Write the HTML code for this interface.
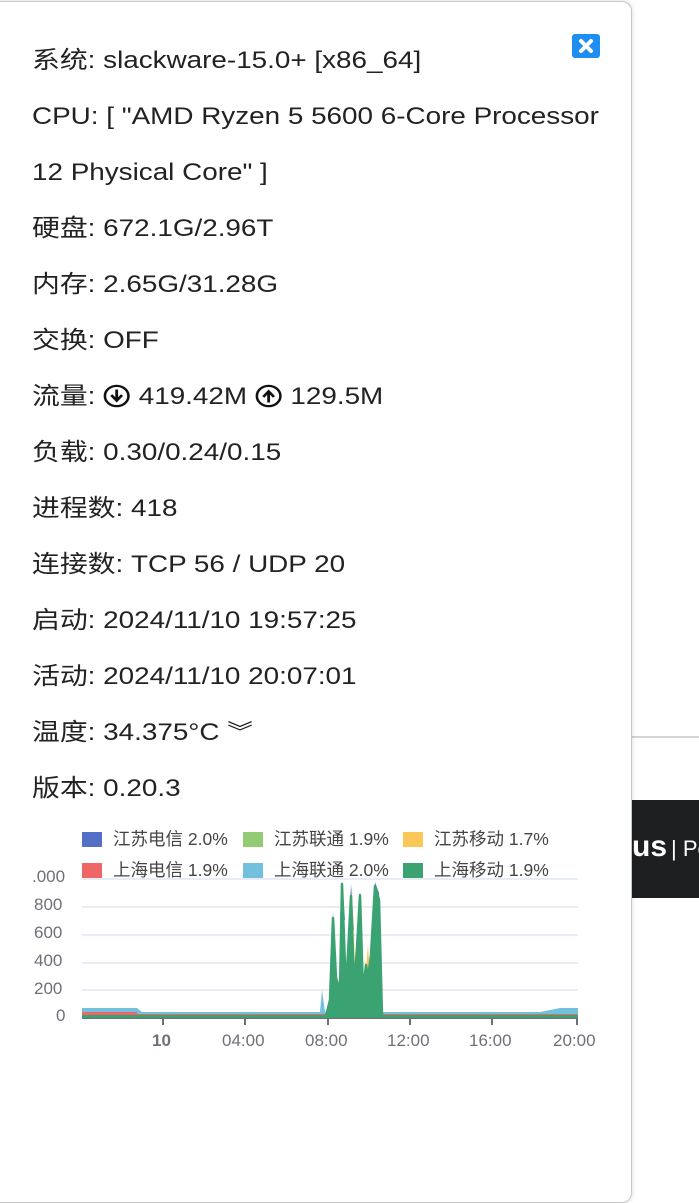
<!DOCTYPE html>
<html><head><meta charset="utf-8"><style>
html,body{margin:0;padding:0;width:699px;height:1083px;overflow:hidden;background:#fff;font-family:"Liberation Sans","Noto Sans CJK SC",sans-serif;}
.line{position:absolute;left:632px;right:0;top:736px;height:2px;background:#d6d6d6}
.bar{position:absolute;left:0;right:0;top:800px;height:98px;background:#1e1f21;color:#fff}
.bar span{position:absolute;left:632px;top:30px;font-size:30px;font-weight:bold;white-space:nowrap}
.bar span i{font-style:normal;font-weight:normal;font-size:22px;margin-left:4px}
.card{position:absolute;left:-10px;top:1px;width:640px;height:1200px;background:#fff;border:1px solid #c8c8c8;border-radius:10px;box-shadow:0 0 6px rgba(0,0,0,.15)}
.rows{position:absolute;left:32px;top:33px;font-size:24px;color:#222;line-height:56px;white-space:nowrap;transform:scaleX(1.16);transform-origin:0 0}
.close{position:absolute;left:572px;top:34px;width:28px;height:24px;background:#1e8ff0;border-radius:3px}
.lg{position:absolute;font-size:17.5px;color:#444;white-space:nowrap}
.lg b{display:inline-block;width:20px;height:15px;vertical-align:-2px;margin-right:11px}
.ax{position:absolute;font-size:17px;color:#6e7079}
</style></head><body>
<div class="line"></div>
<div class="bar"><span>us<i>| Po</i></span></div>
<div class="card"></div>
<div class="close"><svg width="28" height="24" viewBox="0 0 28 24"><path d="M9 7L19 17M19 7L9 17" stroke="#fff" stroke-width="4" stroke-linecap="round"/></svg></div>
<div class="rows">
<div>系统: slackware-15.0+ [x86_64]</div>
<div>CPU: [ "AMD Ryzen 5 5600 6-Core Processor</div>
<div>12 Physical Core" ]</div>
<div>硬盘: 672.1G/2.96T</div>
<div>内存: 2.65G/31.28G</div>
<div>交换: OFF</div>
<div>流量: <svg width="24" height="26" viewBox="0 0 26 26" style="vertical-align:-5px"><circle cx="13" cy="13" r="11" fill="none" stroke="#111" stroke-width="2.4"/><path d="M13 6v11M8 12l5 6 5-6" stroke="#111" stroke-width="2.6" fill="none"/></svg> 419.42M <svg width="24" height="26" viewBox="0 0 26 26" style="vertical-align:-5px"><circle cx="13" cy="13" r="11" fill="none" stroke="#111" stroke-width="2.4"/><path d="M13 20V9M8 14l5-6 5 6" stroke="#111" stroke-width="2.6" fill="none"/></svg> 129.5M</div>
<div>负载: 0.30/0.24/0.15</div>
<div>进程数: 418</div>
<div>连接数: TCP 56 / UDP 20</div>
<div>启动: 2024/11/10 19:57:25</div>
<div>活动: 2024/11/10 20:07:01</div>
<div>温度: 34.375°C <span style="font-size:22px">︾</span></div>
<div>版本: 0.20.3</div>
</div>
<div class="lg" style="left:82px;top:826px"><b style="background:#5470c6"></b>江苏电信 2.0%</div>
<div class="lg" style="left:243px;top:826px"><b style="background:#91cc75"></b>江苏联通 1.9%</div>
<div class="lg" style="left:403px;top:826px"><b style="background:#fac858"></b>江苏移动 1.7%</div>
<div class="lg" style="left:82px;top:857px"><b style="background:#ee6666"></b>上海电信 1.9%</div>
<div class="lg" style="left:243px;top:857px"><b style="background:#73c0de"></b>上海联通 2.0%</div>
<div class="lg" style="left:403px;top:857px"><b style="background:#3ba272"></b>上海移动 1.9%</div>
<div class="ax" style="left:32px;top:867px">.000</div>
<div class="ax" style="left:34px;top:895px">800</div>
<div class="ax" style="left:34px;top:923px">600</div>
<div class="ax" style="left:34px;top:951px">400</div>
<div class="ax" style="left:34px;top:979px">200</div>
<div class="ax" style="left:56px;top:1006px">0</div>
<div class="ax" style="left:152px;top:1031px;font-weight:bold">10</div>
<div class="ax" style="left:222px;top:1031px">04:00</div>
<div class="ax" style="left:305px;top:1031px">08:00</div>
<div class="ax" style="left:387px;top:1031px">12:00</div>
<div class="ax" style="left:469px;top:1031px">16:00</div>
<div class="ax" style="left:553px;top:1031px">20:00</div>
<svg style="position:absolute;left:0;top:0" width="699" height="1083">
<g stroke="#e0e6f1" stroke-width="1.5"><path d="M82 879H578M82 907H578M82 935H578M82 963H578M82 990H578"/></g>
<path d="M82 1018H578" stroke="#6e7079" stroke-width="2"/>
<path d="M163 1018v7M245 1018v7M328 1018v7M410 1018v7M492 1018v7M577 1018v7" stroke="#6e7079" stroke-width="2"/>
<path d="M82 1008H137L142 1012H540L560 1008H578V1016H82Z" fill="#73c0de"/>
<path d="M82 1012H137V1014H578V1016H82Z" fill="#ee6666"/>
<path d="M82 1015H578V1018H82Z" fill="#3ba272"/>
<path d="M320 1012L322 990L325 1012Z" fill="#73c0de"/>
<path d="M331 960L333 912L336 960ZM340 920L342 880L345 920ZM349 930L351 884L354 930ZM373 930L375 882L379 893L380 930Z" fill="#5470c6"/>
<path d="M349 990L352 888L356 990M366 968L368 945L371 990" fill="#fac858"/>
<path d="M326 1016L330 1000L333 918L336 978L340 990L342 884L346 992L351 896L354 988L357 948L360 895L363 992L366 965L368 978L371 955L375 886L379 900L382 1016Z" fill="#3ba272" stroke="#3ba272" stroke-width="2.5" stroke-linejoin="round"/>
</svg>
</body></html>
